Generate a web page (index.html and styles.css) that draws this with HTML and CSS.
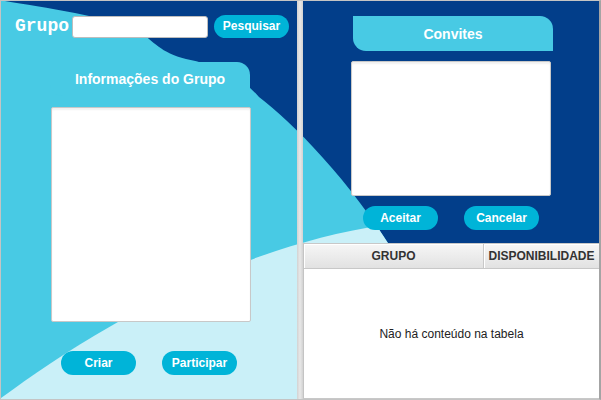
FILE: index.html
```html
<!DOCTYPE html>
<html lang="pt">
<head>
<meta charset="utf-8">
<title>Grupos</title>
<link rel="stylesheet" href="styles.css">
</head>
<body>
<div class="window">
  <svg class="bg" viewBox="0 0 598 398" preserveAspectRatio="none" aria-hidden="true">
    <defs>
      <clipPath id="wave">
        <path d="M0,0 L4,0 C40,6 110,16 138,30 C152,40 160,52 185,58 C215,64 240,75 258,96 C290,120 350,180 395,255 L440,398 L0,398 Z"/>
      </clipPath>
    </defs>
    <rect width="598" height="398" fill="#023e8a"/>
    <path fill="#48cae4" d="M0,0 L4,0 C40,6 110,16 138,30 C152,40 160,52 185,58 C215,64 240,75 258,96 C290,120 350,180 395,255 L440,398 L0,398 Z"/>
    <path fill="#caf0f8" clip-path="url(#wave)" d="M0,397 C80,338 220,249 382,224 L600,212 L600,398 L0,398 Z"/>
  </svg>

  <section class="panel panel-left">
    <div class="search">
      <span class="search-label">Grupo</span>
      <input class="search-field" type="text">
      <button class="btn btn-search">Pesquisar</button>
    </div>
    <div class="tab tab-info">Informações do Grupo</div>
    <div class="box box-info"></div>
    <div class="actions actions-left">
      <button class="btn">Criar</button>
      <button class="btn">Participar</button>
    </div>
  </section>

  <div class="splitter"></div>

  <section class="panel panel-right">
    <div class="invites">
      <div class="tab tab-invites">Convites</div>
      <div class="box box-invites"></div>
      <div class="actions actions-right">
        <button class="btn">Aceitar</button>
        <button class="btn">Cancelar</button>
      </div>
    </div>
    <div class="table">
      <div class="thead">
        <div class="th">GRUPO</div>
        <div class="th">DISPONIBILIDADE</div>
      </div>
      <div class="tbody">Não há conteúdo na tabela</div>
    </div>
  </section>
</div>
</body>
</html>
```

FILE: styles.css
```css
html, body {
  margin: 0;
  padding: 0;
}

body {
  width: 601px;
  height: 400px;
  overflow: hidden;
  font-family: "Liberation Sans", Arial, sans-serif;
  background: #ffffff;
}

.window {
  position: relative;
  box-sizing: border-box;
  width: 601px;
  height: 400px;
  border: 1px solid #c4c4c4;
  border-right: 2px solid #a4a4a4;
  display: flex;
}

.bg {
  position: absolute;
  left: 0;
  top: 0;
  width: 598px;
  height: 398px;
  z-index: 0;
}

.panel {
  position: relative;
  z-index: 1;
  width: 296px;
  height: 398px;
  display: flex;
  flex-direction: column;
  align-items: flex-start;
}

.panel-left {
  box-sizing: border-box;
  padding-top: 14px;
}

.search {
  display: flex;
  align-items: center;
  margin-left: 14px;
  height: 23px;
}

.search-label {
  font-family: "Liberation Mono", "Courier New", monospace;
  font-weight: bold;
  font-size: 18px;
  color: #ffffff;
  margin-right: 3px;
  line-height: 23px;
}

.search-field {
  box-sizing: border-box;
  width: 136px;
  height: 22px;
  margin: 0;
  padding: 0 4px;
  border: 1px solid #bdbdbd;
  border-radius: 3px;
  background: #ffffff;
  outline: none;
}

.btn {
  box-sizing: border-box;
  width: 75px;
  height: 24px;
  margin: 0;
  padding: 0;
  border: none;
  border-radius: 12px;
  background: #00b4d8;
  color: #ffffff;
  font-family: "Liberation Sans", Arial, sans-serif;
  font-weight: bold;
  font-size: 12px;
  line-height: 24px;
  text-align: center;
}

.btn-search {
  margin-left: 6px;
  height: 23px;
  line-height: 23px;
}

.tab {
  box-sizing: border-box;
  width: 200px;
  background: #48cae4;
  color: #ffffff;
  font-weight: bold;
  font-size: 14px;
  border-radius: 0 13px 0 13px;
  display: flex;
  align-items: center;
  justify-content: center;
}

.tab-info {
  margin-top: 24px;
  margin-left: 49px;
  height: 34px;
}

.box {
  box-sizing: border-box;
  width: 200px;
  background: #ffffff;
  border: 1px solid #c8c8c8;
  border-radius: 2px;
  box-shadow: inset 0 2px 2px rgba(0, 0, 0, 0.06);
}

.box-info {
  margin-top: 11px;
  margin-left: 50px;
  height: 215px;
}

.actions {
  display: flex;
  gap: 26px;
}

.actions-left {
  margin-top: 29px;
  margin-left: 60px;
}

.splitter {
  position: relative;
  z-index: 1;
  width: 6px;
  height: 398px;
  background: linear-gradient(to right, #d2d2d2 0, #e8e8e8 50%, #d2d2d2 100%);
}

.invites {
  box-sizing: border-box;
  height: 242px;
  padding-top: 15px;
  display: flex;
  flex-direction: column;
  align-items: flex-start;
}

.tab-invites {
  margin-left: 50px;
  height: 35px;
}

.box-invites {
  margin-top: 10px;
  margin-left: 48px;
  height: 135px;
}

.actions-right {
  margin-top: 10px;
  margin-left: 60px;
}

.table {
  box-sizing: border-box;
  width: 296px;
  flex: 1;
  display: flex;
  flex-direction: column;
  background: #ffffff;
  border-left: 1px solid #c4c4c4;
  border-bottom: 1px solid #c8c8c8;
}

.thead {
  display: grid;
  grid-template-columns: 179px 1fr;
  height: 26px;
  box-sizing: border-box;
  border-top: 1px solid #c8c8c8;
  border-bottom: 1px solid #c8c8c8;
}

.th {
  display: flex;
  align-items: center;
  justify-content: center;
  background: linear-gradient(#f6f6f6, #e2e2e2);
  box-shadow: inset 1px 1px 0 #ffffff;
  font-weight: bold;
  font-size: 12px;
  color: #333333;
}

.th + .th {
  border-left: 1px solid #c8c8c8;
}

.tbody {
  flex: 1;
  display: flex;
  align-items: center;
  justify-content: center;
  font-size: 12px;
  color: #222222;
}
```
